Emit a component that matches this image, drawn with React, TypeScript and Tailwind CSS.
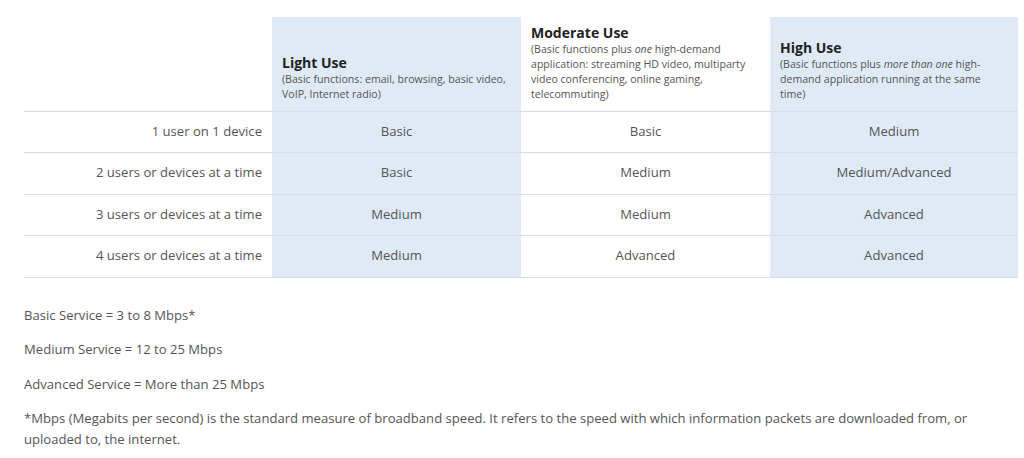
import React from "react";

const rows = [
  { label: "1 user on 1 device", values: ["Basic", "Basic", "Medium"] },
  { label: "2 users or devices at a time", values: ["Basic", "Medium", "Medium/Advanced"] },
  { label: "3 users or devices at a time", values: ["Medium", "Medium", "Advanced"] },
  { label: "4 users or devices at a time", values: ["Medium", "Advanced", "Advanced"] },
];

const App = () => {
  return (
    <div
      className="w-[1024px] h-[458px] bg-white px-6 pt-[17px] text-[#555]"
      style={{ fontFamily: '"Open Sans", "Liberation Sans", sans-serif' }}
    >
      <table className="w-[994px] border-collapse table-fixed">
        <colgroup>
          <col className="w-[248px]" />
          <col className="w-[249px]" />
          <col className="w-[249px]" />
          <col className="w-[248px]" />
        </colgroup>
        <thead>
          <tr className="h-[94px] border-b border-[#d4dde6]">
            <th></th>
            <th className="bg-[#dfeaf6] align-bottom text-left font-normal pl-[10px] pr-[8px] pb-[9px]">
              <div className="text-[14px] leading-[18px] font-bold text-[#222]">Light Use</div>
              <div className="text-[10.6px] leading-[15px]">
                (Basic functions: email, browsing, basic video, VoIP, Internet radio)
              </div>
            </th>
            <th className="align-bottom text-left font-normal px-[10px] pb-[9px]">
              <div className="text-[14px] leading-[18px] font-bold text-[#222]">Moderate Use</div>
              <div className="text-[10.6px] leading-[15px]">
                (Basic functions plus <em>one</em> high-demand application: streaming HD video,
                multiparty video conferencing, online gaming, telecommuting)
              </div>
            </th>
            <th className="bg-[#dfeaf6] align-bottom text-left font-normal pl-[10px] pr-[16px] pb-[9px]">
              <div className="text-[14px] leading-[18px] font-bold text-[#222]">High Use</div>
              <div className="text-[10.6px] leading-[15px]">
                (Basic functions plus <em>more than one</em> high-demand application running at the
                same time)
              </div>
            </th>
          </tr>
        </thead>
        <tbody className="text-[13.1px]">
          {rows.map((row) => (
            <tr key={row.label} className="h-[41.5px] border-b border-[#d4dde6]">
              <td className="text-right pr-[10px]">{row.label}</td>
              <td className="bg-[#dfeaf6] text-center">{row.values[0]}</td>
              <td className="text-center">{row.values[1]}</td>
              <td className="bg-[#dfeaf6] text-center">{row.values[2]}</td>
            </tr>
          ))}
        </tbody>
      </table>

      <div className="mt-[27px] text-[13.1px] leading-[21px] w-[994px]">
        <p className="mb-[13.5px]">Basic Service = 3 to 8 Mbps*</p>
        <p className="mb-[13.5px]">Medium Service = 12 to 25 Mbps</p>
        <p className="mb-[13px]">Advanced Service = More than 25 Mbps</p>
        <p className="pr-[30px]">
          *Mbps (Megabits per second) is the standard measure of broadband speed. It refers to the
          speed with which information packets are downloaded from, or uploaded to, the internet.
        </p>
      </div>
    </div>
  );
};

export default App;
